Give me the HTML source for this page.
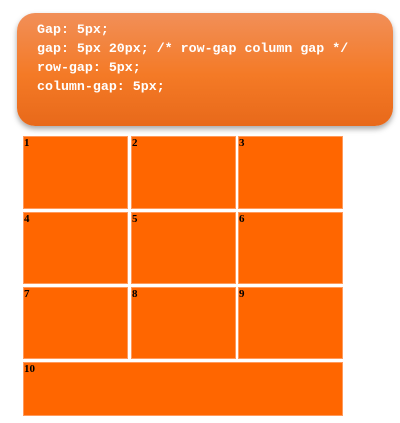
<!DOCTYPE html>
<html><head><style>
body{margin:0;width:400px;height:423px;background:#fff;position:relative;overflow:hidden}
.box{position:absolute;left:17px;top:13px;width:376px;height:113px;border-radius:18px;background:linear-gradient(#f18f58,#f47a26 55%,#e8691a);box-shadow:0 3px 6px rgba(0,0,0,.35)}
.code{position:absolute;left:37px;top:20px;font:bold 13.3px/19px "Liberation Mono",monospace;color:#fff;white-space:pre}
.c{position:absolute;background:#ff6600;border:1px solid #ff9a5c;box-sizing:border-box;font:bold 11px "Liberation Serif",serif;color:#000;line-height:13px}
</style></head><body>
<div class="box"></div>
<div class="code">Gap: 5px;
gap: 5px 20px; /* row-gap column gap */
row-gap: 5px;
column-gap: 5px;</div>
<div class="c" style="left:23px;top:136px;width:105px;height:73px">1</div>
<div class="c" style="left:131px;top:136px;width:105px;height:73px">2</div>
<div class="c" style="left:238px;top:136px;width:105px;height:73px">3</div>
<div class="c" style="left:23px;top:212px;width:105px;height:72px">4</div>
<div class="c" style="left:131px;top:212px;width:105px;height:72px">5</div>
<div class="c" style="left:238px;top:212px;width:105px;height:72px">6</div>
<div class="c" style="left:23px;top:287px;width:105px;height:72px">7</div>
<div class="c" style="left:131px;top:287px;width:105px;height:72px">8</div>
<div class="c" style="left:238px;top:287px;width:105px;height:72px">9</div>
<div class="c" style="left:23px;top:362px;width:320px;height:54px">10</div>
</body></html>
